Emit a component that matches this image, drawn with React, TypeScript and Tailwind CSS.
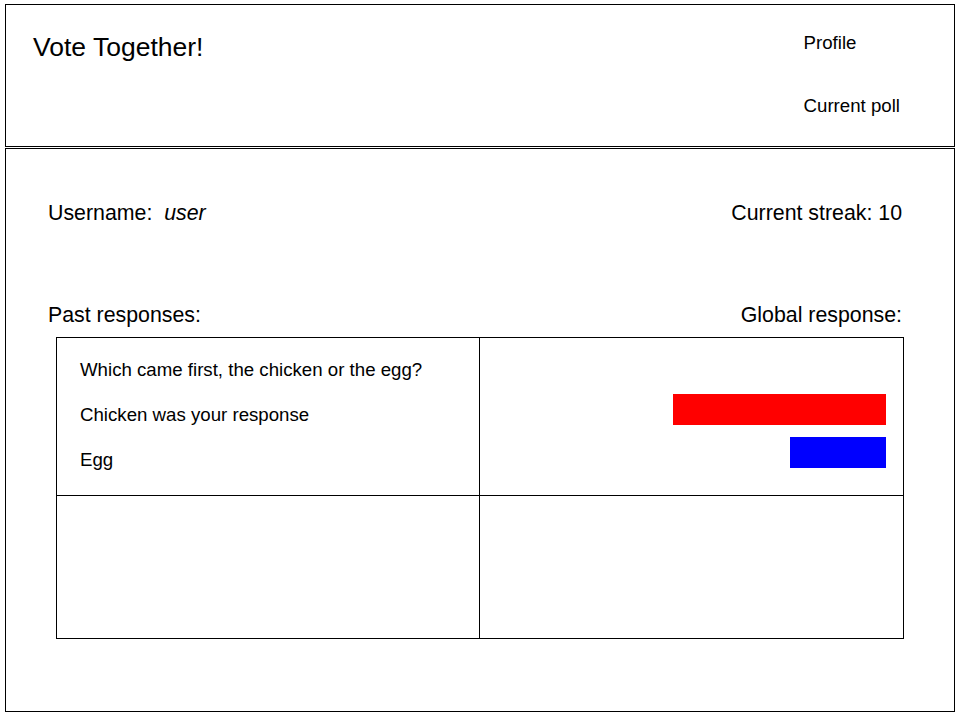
import React from 'react';

const font = { fontFamily: '"Liberation Sans", Arial, sans-serif' };

const results = [
  { label: 'Chicken', width: 213, color: 'bg-[#ff0000]' },
  { label: 'Egg', width: 96, color: 'bg-[#0000ff]' },
];

export default function App() {
  return (
    <div style={font} className="w-[960px] h-[720px] bg-white text-black pt-[4px] px-[5px]">
      {/* Header */}
      <header className="w-[950px] h-[143px] border border-black flex justify-between">
        <h1 className="pl-[27px] pt-[27px] text-[26.5px] leading-[30px] font-normal">Vote Together!</h1>
        <nav className="pr-[54px] pt-[27px] flex flex-col gap-[41px] text-[18.67px] leading-[22px]">
          <span>Profile</span>
          <span>Current poll</span>
        </nav>
      </header>

      {/* Main */}
      <main className="mt-[1px] w-[950px] h-[564px] border border-black pl-[42px] pr-[52px] pt-[52px] flex flex-col text-[21.33px] leading-[24px]">
        <div className="flex justify-between">
          <span className="whitespace-pre">Username:  <i>user</i></span>
          <span>Current streak: 10</span>
        </div>
        <div className="flex justify-between mt-[78px]">
          <span>Past responses:</span>
          <span>Global response:</span>
        </div>

        <div className="mt-[10px] ml-[8px] w-[848px] h-[302px] border border-black grid grid-cols-[423px_1fr] grid-rows-[158px_1fr]">
          <div className="border-r border-b border-black pl-[23px] pt-[20px] flex flex-col gap-[21px] text-[18.67px] leading-[24px]">
            <span>Which came first, the chicken or the egg?</span>
            <span>Chicken was your response</span>
            <span>Egg</span>
          </div>
          <div className="border-b border-black pt-[56px] pr-[17px] flex flex-col items-end gap-[12px]">
            {results.map(r => (
              <div key={r.label} className={`h-[31px] ${r.color}`} style={{ width: r.width }} />
            ))}
          </div>
          <div className="border-r border-black" />
          <div />
        </div>
      </main>
    </div>
  );
}
